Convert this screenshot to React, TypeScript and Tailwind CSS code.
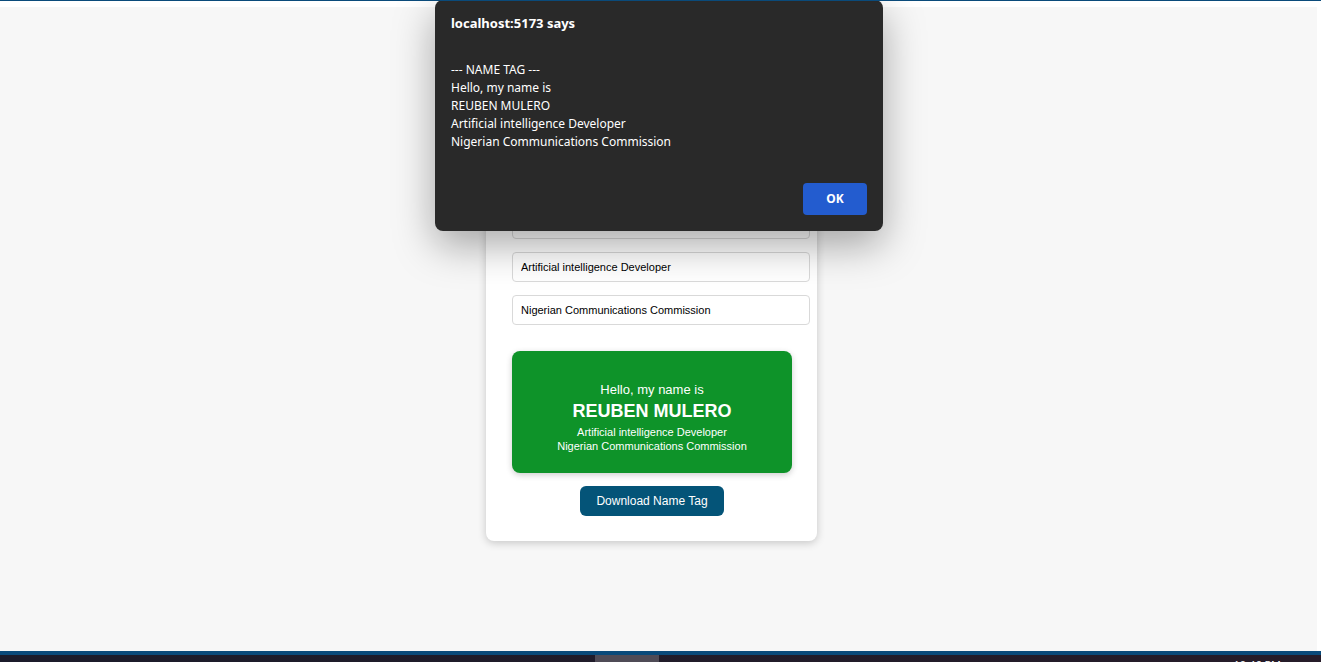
import { useState } from "react";

const fields = [
  { id: "name", label: "Name", value: "REUBEN MULERO" },
  { id: "role", label: "Role", value: "Artificial intelligence Developer" },
  { id: "company", label: "Company", value: "Nigerian Communications Commission" },
];

function NameTag({ name, role, company }: { name: string; role: string; company: string }) {
  return (
    <section className="mt-[26px] rounded-lg bg-[#0e9329] px-6 pt-[30px] pb-5 text-center text-white shadow-[0_2px_6px_rgba(0,0,0,0.2)]">
      <p className="text-[13px] leading-[18px]">Hello, my name is</p>
      <h2 className="text-lg leading-6 font-bold">{name}</h2>
      <p className="mt-[2px] text-[11px] leading-[14px]">{role}</p>
      <p className="text-[11px] leading-[14px]">{company}</p>
    </section>
  );
}

function AlertDialog({ lines, onClose }: { lines: string[]; onClose: () => void }) {
  return (
    <div className="absolute inset-x-0 -top-px flex justify-center pr-[3px]">
      <div
        role="alertdialog"
        aria-labelledby="alert-title"
        className="w-[448px] rounded-lg bg-[#292929] px-4 pt-[14px] pb-4 font-['Noto_Sans','Open_Sans',sans-serif] text-white shadow-[0_14px_40px_rgba(0,0,0,0.34)]"
      >
        <h1 id="alert-title" className="text-[13px] leading-[18px] font-bold">
          localhost:5173 says
        </h1>
        <div className="mt-[29px] text-[12px] leading-[18px]">
          {lines.map((line) => (
            <p key={line}>{line}</p>
          ))}
        </div>
        <div className="mt-8 flex justify-end">
          <button
            type="button"
            onClick={onClose}
            className="h-8 w-16 rounded bg-[#235ccf] text-[12px] font-bold text-white"
          >
            OK
          </button>
        </div>
      </div>
    </div>
  );
}

export default function App() {
  const [values, setValues] = useState(fields.map((f) => f.value));
  const [open, setOpen] = useState(true);
  const [name, role, company] = values;

  return (
    <div className="relative flex h-screen flex-col overflow-hidden border-t border-[#0a4a7a] bg-white font-['Liberation_Sans',Arial,sans-serif]">
      <main className="mt-[6px] mr-1 flex flex-1 items-center justify-center bg-[#f7f7f7] pr-[14px]">
        <div className="w-[331px] rounded-lg bg-white pt-[26px] pr-[25px] pb-[25px] pl-[26px] shadow-[0_2px_8px_rgba(0,0,0,0.2)]">
          <h2 className="mb-[26px] text-center text-2xl leading-10 font-bold">Name Tag</h2>
          <form className="-mr-[18px] flex flex-col gap-[13px]">
            {fields.map((f, i) => (
              <input
                key={f.id}
                id={f.id}
                aria-label={f.label}
                value={values[i]}
                onChange={(e) => setValues(values.map((v, j) => (j === i ? e.target.value : v)))}
                className="h-[30px] w-full rounded border border-[#d9d9d9] px-2 text-[11px] text-black"
              />
            ))}
          </form>
          <NameTag name={name} role={role} company={company} />
          <div className="mt-[13px] flex justify-center">
            <button
              type="button"
              onClick={() => setOpen(true)}
              className="h-[30px] rounded-md bg-[#045478] px-4 text-[12px] text-white"
            >
              Download Name Tag
            </button>
          </div>
        </div>
      </main>
      <footer className="flex h-[11px] shrink-0 items-start overflow-hidden border-t-4 border-[#0a4a7a] bg-linear-to-r from-[#1b1b2a] to-[#261c29]">
        <div className="flex-1" />
        <div className="mr-[2px] h-full w-16 bg-[#4f4b56]" />
        <div className="flex w-1/2 justify-end pt-[3px] pr-10">
          <time className="font-['Open_Sans','Noto_Sans',sans-serif] text-[11px] leading-[14px] text-white">
            10:46 PM
          </time>
        </div>
      </footer>
      {open && (
        <AlertDialog
          lines={["--- NAME TAG ---", "Hello, my name is", name, role, company]}
          onClose={() => setOpen(false)}
        />
      )}
    </div>
  );
}
